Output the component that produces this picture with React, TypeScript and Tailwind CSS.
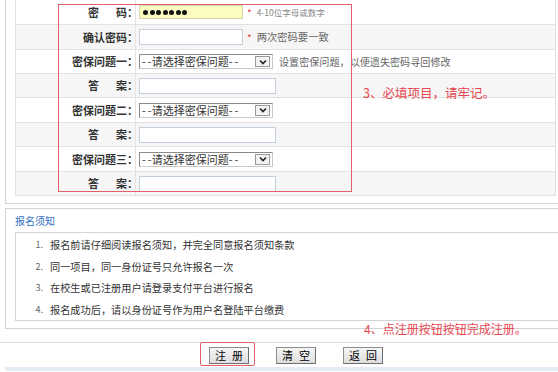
import type { ReactNode } from "react";

type RowProps = {
  label: ReactNode;
  height: string;
  gray?: boolean;
  children?: ReactNode;
};

function Row({ label, height, gray, children }: RowProps) {
  return (
    <div
      className={
        "flex border-b border-[#e2e2e2] " +
        height +
        " " +
        (gray ? "bg-[#f6f6f6]" : "bg-white")
      }
    >
      <div className="flex w-[120px] shrink-0 items-center justify-end border-r border-[#e2e2e2] text-[11px] font-bold text-[#333]">
        <span className="mr-[-3px]">{label}</span>
      </div>
      <div className="flex flex-1 items-center pl-[3px]">{children}</div>
    </div>
  );
}

function TextBox({ wide }: { wide?: boolean }) {
  return (
    <div
      className={
        "h-[16px] border border-[#c3cfdd] bg-white " +
        (wide ? "w-[137px]" : "w-[104px]")
      }
    />
  );
}

function Select() {
  return (
    <div className="flex h-[15px] w-[134px] items-center justify-between border border-[#8a8a8a] border-b-[#c8c8c8] border-r-[#c8c8c8] bg-white pl-[2px] pr-[2px] text-[11px] leading-none text-[#333]">
      <span>
        <span className="tracking-[2px]">-</span>-请选择密保问题
        <span className="tracking-[2px]">-</span>-
      </span>
      <span className="flex h-[11px] w-[15px] items-center justify-center border border-[#9a9a9a] bg-[#f3f3f3]">
        <svg width="8" height="6" viewBox="0 0 8 6">
          <path d="M1 1.5 L4 4.5 L7 1.5" fill="none" stroke="#222" strokeWidth="1.6" />
        </svg>
      </span>
    </div>
  );
}

function Spaced({ a, b }: { a: string; b: string }) {
  return (
    <span className="inline-flex">
      {a}
      <span className="inline-block w-[17px]" />
      {b}：
    </span>
  );
}

const notes = [
  "报名前请仔细阅读报名须知，并完全同意报名须知条款",
  "同一项目，同一身份证号只允许报名一次",
  "在校生或已注册用户请登录支付平台进行报名",
  "报名成功后，请以身份证号作为用户名登陆平台缴费",
];

function Button({ a, b }: { a: string; b: string }) {
  return (
    <div className="flex h-[17px] w-[40px] items-center justify-center gap-[6px] border border-[#8c8c8c] border-b-[#6e6e6e] border-r-[#6e6e6e] bg-gradient-to-b from-[#f6f6f6] to-[#dedede] text-[11px] leading-none text-black">
      <span>{a}</span>
      <span>{b}</span>
    </div>
  );
}

export default function App() {
  return (
    <div className="relative h-[372px] w-[558px] overflow-hidden bg-white font-['Noto_Sans_CJK_SC',sans-serif]">
      {/* form table */}
      <div className="ml-[5px] border-b border-l border-[#d4d4d4] pb-[7px] pl-[9px]">
        <div className="mr-[2px] border-l border-r border-[#e2e2e2]">
          <Row label={<Spaced a="密" b="码" />} height="h-[25px]">
            <div className="flex h-[14px] w-[104px] items-center gap-[1.5px] border border-[#d6d6a8] bg-[#fbfbc2] pl-[3px]">
              {Array.from({ length: 7 }).map((_, i) => (
                <span key={i} className="h-[5px] w-[5px] rounded-full bg-[#111]" />
              ))}
            </div>
            <span className="ml-[4px] text-[10px] text-[#e04444]">*</span>
            <span className="ml-[5px] text-[8.5px] text-[#888]">4-10位字母或数字</span>
          </Row>
          <Row label="确认密码：" height="h-[25px]" gray>
            <TextBox />
            <span className="ml-[4px] text-[10px] text-[#e04444]">*</span>
            <span className="ml-[5px] text-[10.3px] text-[#666]">两次密码要一致</span>
          </Row>
          <Row label="密保问题一：" height="h-[24px]">
            <Select />
            <span className="ml-[6px] text-[10.1px] text-[#666]">
              设置密保问题，以便遗失密码寻回修改
            </span>
          </Row>
          <Row label={<Spaced a="答" b="案" />} height="h-[24px]" gray>
            <TextBox wide />
          </Row>
          <Row label="密保问题二：" height="h-[25px]">
            <Select />
          </Row>
          <Row label={<Spaced a="答" b="案" />} height="h-[24px]" gray>
            <TextBox wide />
          </Row>
          <Row label="密保问题三：" height="h-[25px]">
            <Select />
          </Row>
          <Row label={<Spaced a="答" b="案" />} height="h-[24px]" gray>
            <TextBox wide />
          </Row>
        </div>
      </div>

      {/* notice */}
      <div className="ml-[5px] mt-[4px] border-b border-l border-t border-[#d4d4d4] pb-[7px]">
        <div className="flex h-[23px] items-center pl-[9px] text-[10px] text-[#2f6fc4]">
          报名须知
        </div>
        <div className="ml-[9px] border border-r-0 border-[#d4d4d4] bg-white pt-[1px]">
          {notes.map((n, i) => (
            <div key={n} className="flex h-[21.5px] items-center text-[10.2px] text-[#333]">
              <span className="w-[34px] pr-[7px] text-right text-[9px] text-[#666]">
                {i + 1}.
              </span>
              <span>{n}</span>
            </div>
          ))}
        </div>
      </div>

      {/* buttons */}
      <div className="mt-[13px] flex h-[25px] items-center border-t border-[#dcdcdc] pl-[209px]">
        <div className="flex gap-[27px]">
          <Button a="注" b="册" />
          <Button a="清" b="空" />
          <Button a="返" b="回" />
        </div>
      </div>
      <div className="ml-[5px] h-[4px] bg-[#e3ecf6]" />

      {/* annotations */}
      <div className="pointer-events-none absolute left-[58px] top-[4px] h-[188px] w-[294px] border-[1.5px] border-[#e2606a]" />
      <div className="absolute left-[363px] top-[87px] text-[12.5px] leading-none text-[#e6474f]">
        3、必填项目，请牢记。
      </div>
      <div className="absolute left-[364px] top-[323px] text-[12px] leading-none text-[#e6474f]">
        4、点注册按钮按钮完成注册。
      </div>
      <div className="pointer-events-none absolute left-[200px] top-[342px] h-[24px] w-[55px] rounded-[2px] border-[1.5px] border-[#e2606a]" />
    </div>
  );
}
